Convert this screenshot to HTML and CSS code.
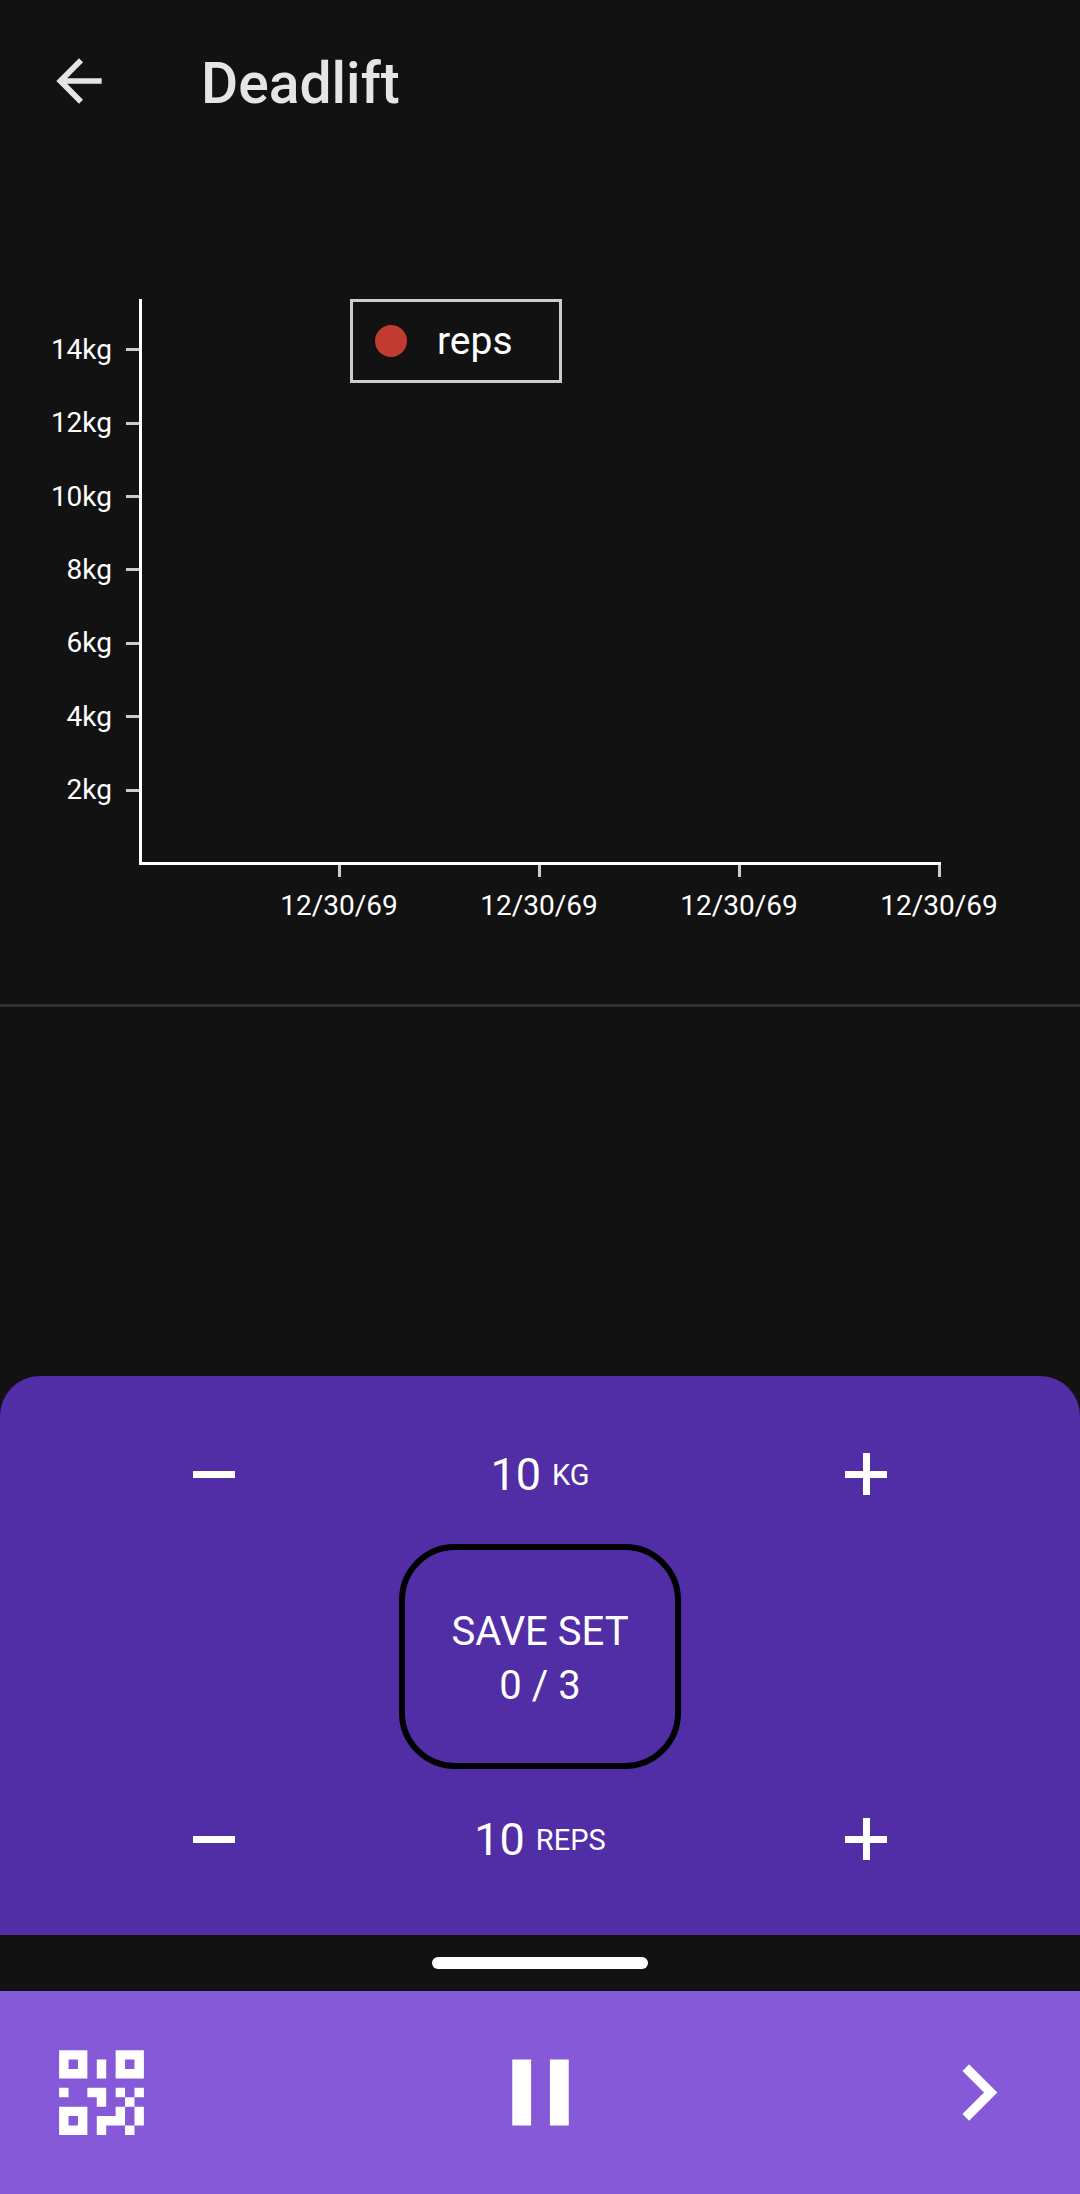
FILE: index.html
```html
<!DOCTYPE html>
<html lang="en">
<head>
<meta charset="utf-8">
<meta name="viewport" content="width=device-width, initial-scale=1">
<title>Deadlift</title>
<link rel="stylesheet" href="styles.css">
</head>
<body>
<div class="app">
  <header class="app-bar">
    <button class="icon-button back" type="button" aria-label="Back">
      <svg viewBox="0 0 24 24"><path d="M20 11H7.83l5.59-5.59L12 4l-8 8 8 8 1.41-1.41L7.83 13H20z"/></svg>
    </button>
    <h1 class="title">Deadlift</h1>
  </header>

  <main class="content">
    <section class="chart" aria-label="Progress">
      <ol class="y-axis">
        <li>14kg</li>
        <li>12kg</li>
        <li>10kg</li>
        <li>8kg</li>
        <li>6kg</li>
        <li>4kg</li>
        <li>2kg</li>
      </ol>
      <div class="plot">
        <div class="legend"><span class="dot"></span>reps</div>
      </div>
      <ol class="x-axis">
        <li>12/30/69</li>
        <li>12/30/69</li>
        <li>12/30/69</li>
        <li>12/30/69</li>
      </ol>
    </section>
  </main>

  <section class="panel" aria-label="Current set">
    <div class="stepper">
      <button class="icon-button step" type="button" aria-label="Less weight">
        <svg viewBox="0 0 72 72"><path d="M15 33h42v7H15z"/></svg>
      </button>
      <p class="value">10 <span class="unit">KG</span></p>
      <button class="icon-button step" type="button" aria-label="More weight">
        <svg viewBox="0 0 72 72"><path d="M15 33h18V15h7v18h17v7H40v17h-7V40H15z"/></svg>
      </button>
    </div>
    <button class="save" type="button">SAVE SET<br>0 / 3</button>
    <div class="stepper">
      <button class="icon-button step" type="button" aria-label="Fewer reps">
        <svg viewBox="0 0 72 72"><path d="M15 33h42v7H15z"/></svg>
      </button>
      <p class="value">10 <span class="unit">REPS</span></p>
      <button class="icon-button step" type="button" aria-label="More reps">
        <svg viewBox="0 0 72 72"><path d="M15 33h18V15h7v18h17v7H40v17h-7V40H15z"/></svg>
      </button>
    </div>
  </section>

  <div class="handle-strip"><span class="handle"></span></div>

  <nav class="bottom-bar" aria-label="Workout">
    <button class="icon-button nav" type="button" aria-label="Scan code">
      <svg viewBox="-1.5 -1.5 12 12"><path fill-rule="evenodd" d="M0 0h3v3H0zM1 1v1h1V1zM6 0h3v3H6zM7 1v1h1V1zM0 6h3v3H0zM1 7v1h1V7zM4 1h1v2H4zM0 4h1v1H0zM3 4h2v2H4V5H3zM6 4h1v1H6zM8 4h1v1H8zM7 5h1v1H7zM6 6h1v2H5v1H4V7h2zM8 6h1v2H8zM7 8h1v1H7z"/></svg>
    </button>
    <button class="icon-button nav" type="button" aria-label="Pause">
      <svg viewBox="0 0 24 24"><path d="M6 5h4v14H6zM14 5h4v14h-4z"/></svg>
    </button>
    <button class="icon-button nav" type="button" aria-label="Next exercise">
      <svg viewBox="0 0 24 24"><path d="M8.59 16.58 13.17 12 8.59 7.41 10 6l6 6-6 6z"/></svg>
    </button>
  </nav>
</div>
</body>
</html>
```
FILE: styles.css
```css
* {
  box-sizing: border-box;
}

body {
  margin: 0;
  background: #121212;
  color: #fff;
  font-family: Roboto, "Liberation Sans", sans-serif;
}

h1,
p,
ol {
  margin: 0;
  padding: 0;
}

ol {
  list-style: none;
}

.app {
  display: flex;
  flex-direction: column;
  min-height: 100vh;
}

.icon-button {
  display: block;
  flex: none;
  padding: 0;
  border: 0;
  background: none;
  color: inherit;
}

.icon-button svg {
  display: block;
  width: 100%;
  fill: currentColor;
}

.app-bar {
  display: flex;
  align-items: center;
  gap: 88px;
  padding: 45px 45px 40px;
  color: #e5e5e7;
}

.back {
  width: 68px;
}

.title {
  padding-top: 6px;
  font-size: 57px;
  line-height: 66px;
  font-weight: 500;
}

.content {
  flex: 1;
}

.chart {
  display: grid;
  grid-template-columns: 139px repeat(9, 1fr) 41px;
  padding: 142px 0 82px;
  border-bottom: 3px solid #303030;
  font-size: 28px;
  line-height: 32px;
}

.y-axis {
  grid-column: 1;
  display: flex;
  flex-direction: column;
  height: 514px;
  margin-top: 14px;
}

.y-axis li {
  flex: 1;
  display: flex;
  align-items: center;
  justify-content: flex-end;
  gap: 14px;
}

.y-axis li::after {
  content: "";
  width: 13px;
  height: 3px;
  background: #ccc;
}

.plot {
  grid-column: 2 / 10;
  height: 566px;
  margin-right: -2px;
  border-left: 3px solid #fff;
  border-bottom: 3px solid #fff;
}

.legend {
  display: flex;
  align-items: center;
  gap: 30px;
  width: 212px;
  height: 84px;
  margin-left: 208px;
  padding: 0 22px;
  border: 3px solid #ccc;
  font-size: 39px;
}

.dot {
  width: 32px;
  height: 32px;
  border-radius: 50%;
  background: #c23b31;
}

.x-axis {
  grid-column: 3 / 11;
  display: grid;
  grid-template-columns: repeat(4, 1fr);
}

.x-axis li {
  display: flex;
  flex-direction: column;
  align-items: center;
  gap: 13px;
}

.x-axis li::before {
  content: "";
  width: 3px;
  height: 12px;
  background: #ccc;
}

.panel {
  display: flex;
  flex-direction: column;
  align-items: center;
  gap: 34px;
  padding: 62px 51px 60px;
  border-radius: 40px 40px 0 0;
  background: #512da6;
}

.stepper {
  display: grid;
  grid-template-columns: repeat(3, 1fr);
  align-items: center;
  justify-items: center;
  width: 100%;
}

.step {
  width: 72px;
}

.value {
  display: flex;
  align-items: center;
  gap: 11px;
  padding-top: 2px;
  font-size: 45px;
  line-height: 54px;
}

.unit {
  font-size: 29px;
  line-height: 32px;
}

.save {
  padding: 55px 46px 50px;
  border: 6px solid #000;
  border-radius: 56px;
  background: none;
  color: inherit;
  font: inherit;
  font-size: 40px;
  line-height: 54px;
}

.handle-strip {
  display: flex;
  align-items: center;
  justify-content: center;
  height: 56px;
}

.handle {
  width: 20%;
  height: 12px;
  border-radius: 6px;
  background: #fff;
}

.bottom-bar {
  display: flex;
  justify-content: space-between;
  padding: 45px;
  background: #8659d9;
}

.nav {
  width: 113px;
}
```
